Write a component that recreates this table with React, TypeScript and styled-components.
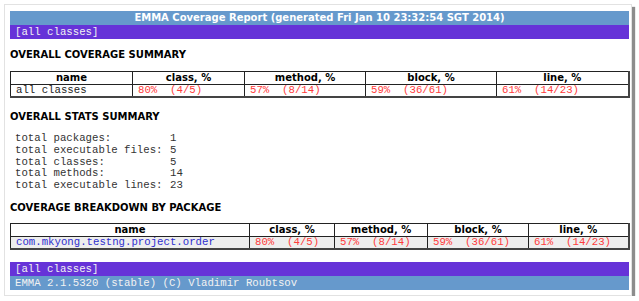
import React from 'react';
import styled, { createGlobalStyle } from 'styled-components';

const GlobalStyle = createGlobalStyle`
body {
  margin: 0;
  background: #fff;
}
`
const Page = styled.div`
padding: 4px 0 0 4px;
`
const Card = styled.div`
box-sizing: border-box;
width: 628px;
border: 1px solid #e2e2e2;
box-shadow: 3px 3px 1px #8c8c8c;
padding: 6px 2px 5px 5px;
background: #fff;
`
const TitleBar = styled.div`
height: 14px;
line-height: 14px;
background: #6699cc;
color: #fff;
font-family: "DejaVu Sans", Verdana, sans-serif;
font-weight: bold;
font-size: 10px;
text-align: center;
`
const Bar = styled.div<{ $bg: string; $top?: number }>`
margin-top: ${p => p.$top ?? 0}px;
height: 14px;
line-height: 14px;
background: ${p => p.$bg};
color: #f2f2f2;
font-family: "Liberation Mono", monospace;
font-size: 10.7px;
padding-left: 5px;
white-space: pre;
`
const Heading = styled.h3<{ $top: number }>`
margin: ${p => p.$top}px 0 0 0;
height: 14px;
line-height: 14px;
font-family: "DejaVu Sans", Verdana, sans-serif;
font-weight: bold;
font-size: 10px;
color: #000;
`
const Table = styled.table<{ $top: number }>`
margin-top: ${p => p.$top}px;
width: 100%;
border-collapse: collapse;
table-layout: fixed;
border-top: 1px solid #222;
border-left: 1px solid #222;
border-right: 2px solid #444;
border-bottom: 2px solid #444;
`
const Col = styled.col<{ $w: number }>`
width: ${p => p.$w}px;
`
const Th = styled.th`
height: 12px;
line-height: 12px;
padding: 0 5px;
border: 1px solid #222;
font-family: "DejaVu Sans", Verdana, sans-serif;
font-weight: bold;
font-size: 10px;
color: #000;
text-align: center;
`
const Td = styled.td<{ $shade?: boolean; $tone?: 'red' | 'link' }>`
height: 11px;
line-height: 11px;
padding: 0 5px;
border-right: 1px solid #222;
background: ${p => (p.$shade ? '#eeeeee' : '#fff')};
font-family: "Liberation Mono", monospace;
font-size: 10.7px;
white-space: pre;
overflow: hidden;
color: ${p => (p.$tone === 'red' ? '#ff3b3b' : p.$tone === 'link' ? '#2f2fcf' : '#222')};
`
const Stats = styled.div`
margin-top: 9px;
padding-left: 5px;
display: grid;
grid-template-columns: 155px auto;
font-family: "Liberation Mono", monospace;
font-size: 10.7px;
line-height: 11.8px;
color: #333;
white-space: pre;
`

interface Coverage {
  name: string;
  cls: string;
  method: string;
  block: string;
  line: string;
}

const overall: Coverage = {
  name: 'all classes',
  cls: '80%  (4/5)',
  method: '57%  (8/14)',
  block: '59%  (36/61)',
  line: '61%  (14/23)',
};

const pkg: Coverage = { ...overall, name: 'com.mkyong.testng.project.order' };

const stats: [string, string][] = [
  ['total packages:', '1'],
  ['total executable files:', '5'],
  ['total classes:', '5'],
  ['total methods:', '14'],
  ['total executable lines:', '23'],
];

function CoverageTable({ widths, row, top, shade, link }: { widths: number[]; row: Coverage; top: number; shade?: boolean; link?: boolean }) {
  return (
    <Table $top={top}>
      <colgroup>
        {widths.map((w, i) => <Col key={i} $w={w} />)}
      </colgroup>
      <thead>
        <tr>
          <Th>name</Th>
          <Th>class, %</Th>
          <Th>method, %</Th>
          <Th>block, %</Th>
          <Th>line, %</Th>
        </tr>
      </thead>
      <tbody>
        <tr>
          <Td $shade={shade} $tone={link ? 'link' : undefined}>{row.name}</Td>
          <Td $shade={shade} $tone="red">{row.cls}</Td>
          <Td $shade={shade} $tone="red">{row.method}</Td>
          <Td $shade={shade} $tone="red">{row.block}</Td>
          <Td $shade={shade} $tone="red">{row.line}</Td>
        </tr>
      </tbody>
    </Table>
  );
}

function App() {
  return (
    <Page>
      <GlobalStyle />
      <Card>
        <TitleBar>EMMA Coverage Report (generated Fri Jan 10 23:32:54 SGT 2014)</TitleBar>
        <Bar $bg="#6633d8">[all classes]</Bar>

        <Heading $top={9}>OVERALL COVERAGE SUMMARY</Heading>
        <CoverageTable top={9} widths={[122, 112, 121, 131, 132]} row={overall} />

        <Heading $top={12}>OVERALL STATS SUMMARY</Heading>
        <Stats>
          {stats.map(([k, v]) => (
            <React.Fragment key={k}>
              <span>{k}</span>
              <span>{v}</span>
            </React.Fragment>
          ))}
        </Stats>

        <Heading $top={9}>COVERAGE BREAKDOWN BY PACKAGE</Heading>
        <CoverageTable top={8} widths={[239, 85, 93, 101, 100]} row={pkg} shade link />

        <Bar $bg="#6633d8" $top={12}>[all classes]</Bar>
        <Bar $bg="#6699cc">EMMA 2.1.5320 (stable) (C) Vladimir Roubtsov</Bar>
      </Card>
    </Page>
  );
}

export default App;
